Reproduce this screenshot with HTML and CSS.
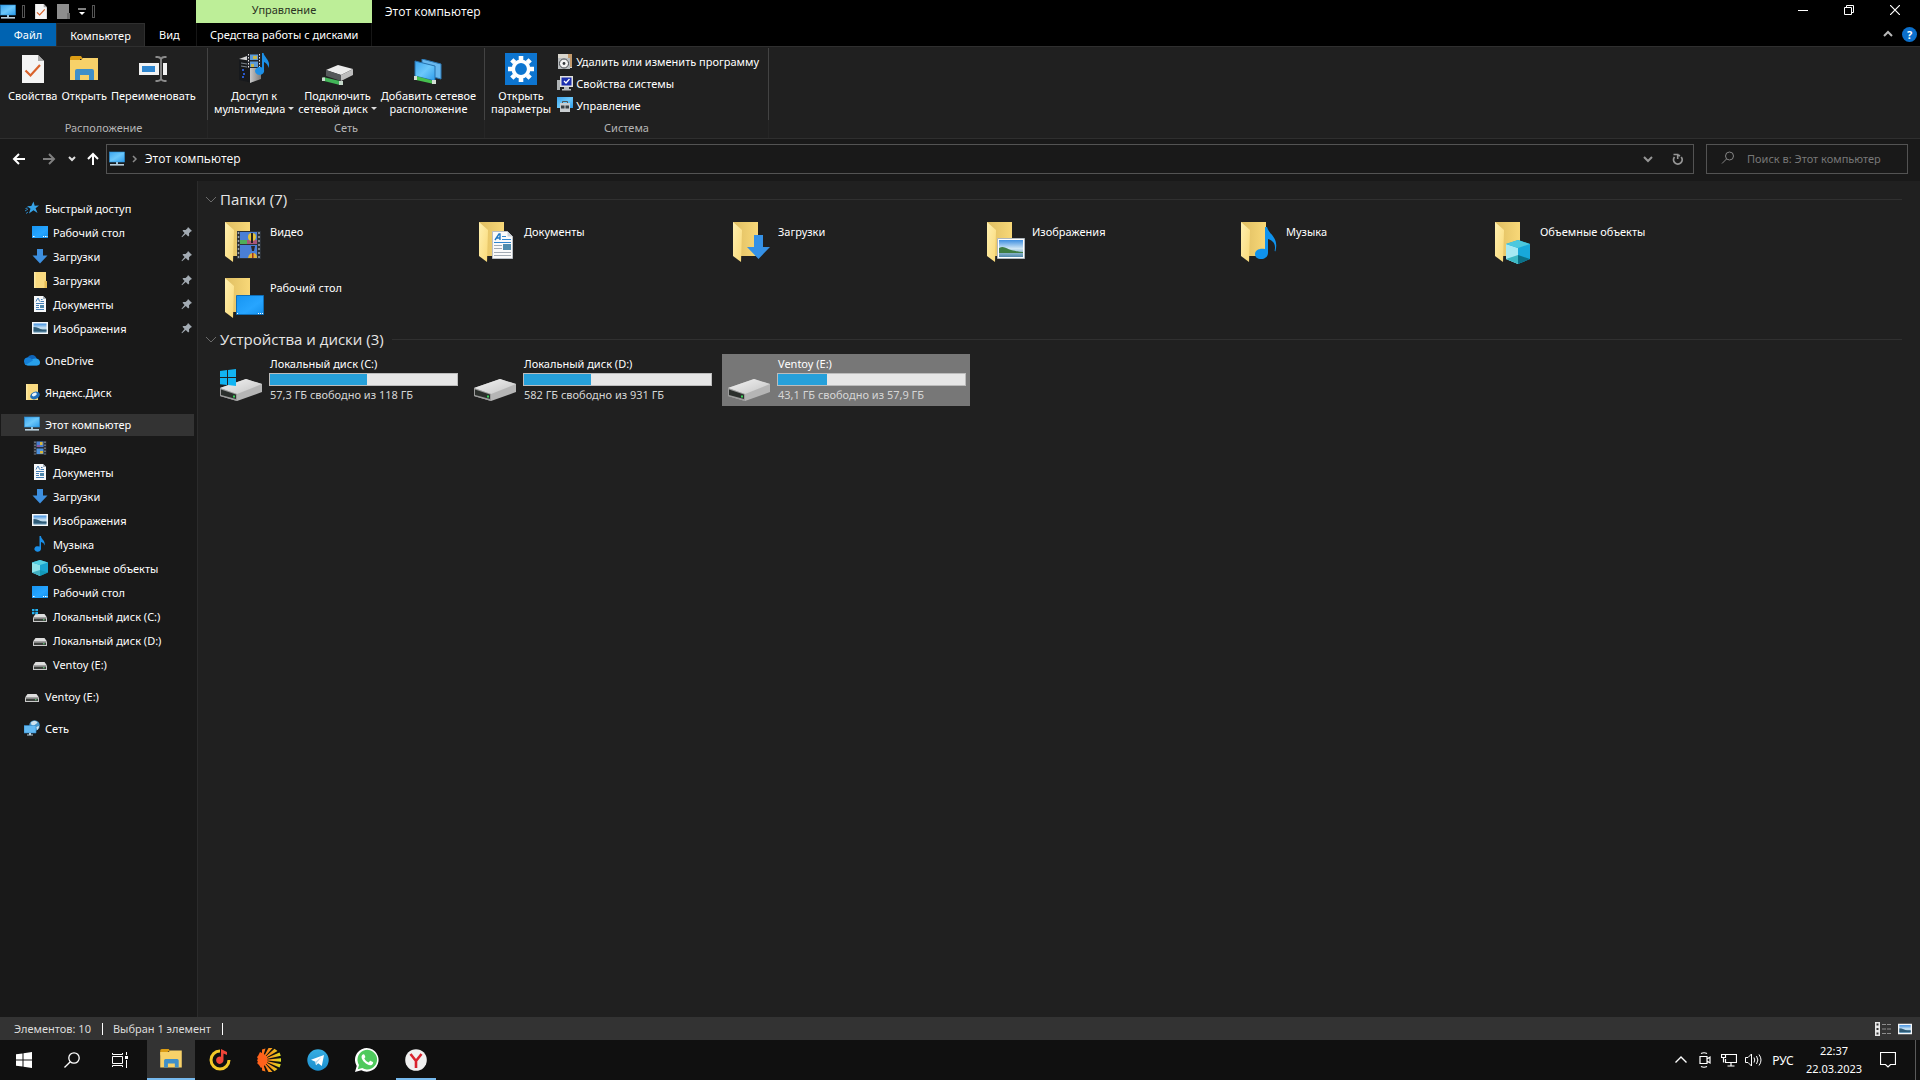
FILE: index.html
```html
<!DOCTYPE html>
<html lang="ru">
<head>
    <meta charset="UTF-8">
    <meta name="viewport" content="width=device-width, initial-scale=1.0">
    <title>Этот компьютер</title>
    <link rel="stylesheet" href="styles.css">
</head>
<body>

<!-- Набор иконок -->
<svg class="sprite" aria-hidden="true">
    <defs>
        <linearGradient id="g-screen" x1="0" y1="0" x2="1" y2="1">
            <stop offset="0" stop-color="#3ba4ee"/><stop offset="0.5" stop-color="#6cc8fb"/><stop offset="1" stop-color="#2c9bea"/>
        </linearGradient>
        <linearGradient id="g-desk" x1="0" y1="0" x2="1" y2="1">
            <stop offset="0" stop-color="#1795f2"/><stop offset="0.6" stop-color="#27a5ff"/><stop offset="1" stop-color="#1490ec"/>
        </linearGradient>
        <linearGradient id="g-back" x1="0" y1="0" x2="1" y2="0">
            <stop offset="0" stop-color="#dfbe62"/><stop offset="1" stop-color="#f8d878"/>
        </linearGradient>
        <linearGradient id="g-flap" x1="0" y1="0" x2="1" y2="1">
            <stop offset="0" stop-color="#fff0b0"/><stop offset="1" stop-color="#f9d978"/>
        </linearGradient>
        <linearGradient id="g-drive" x1="0" y1="0" x2="1" y2="1">
            <stop offset="0" stop-color="#f4f4f4"/><stop offset="1" stop-color="#c4c4c4"/>
        </linearGradient>
        <linearGradient id="g-sky" x1="0" y1="0" x2="0" y2="1">
            <stop offset="0" stop-color="#3f8fe0"/><stop offset="0.5" stop-color="#cfe6f5"/><stop offset="1" stop-color="#4d86a8"/>
        </linearGradient>
        <linearGradient id="g-tower" x1="0" y1="0" x2="1" y2="0">
            <stop offset="0" stop-color="#c8c8c8"/><stop offset="1" stop-color="#7b7b7b"/>
        </linearGradient>
        <linearGradient id="g-sun" x1="0" y1="0" x2="24" y2="0" gradientUnits="userSpaceOnUse">
            <stop offset="0" stop-color="#ff4a1a"/><stop offset="0.45" stop-color="#ff8a1a"/><stop offset="1" stop-color="#d8e020"/>
        </linearGradient>
        <linearGradient id="g-tg" x1="0" y1="0" x2="0" y2="1">
            <stop offset="0" stop-color="#37aee2"/><stop offset="1" stop-color="#1b8fcf"/>
        </linearGradient>
    </defs>

    <symbol id="i-pc" viewBox="0 0 16 16">
        <rect x="0.5" y="1" width="15" height="10" fill="url(#g-screen)" stroke="#2b8fd8" stroke-width="0.6"/>
        <path d="M7 11h2v2H7z" fill="#9cc4dc"/><path d="M1 13h14v1.6H1z" fill="#b8cfdd"/>
    </symbol>
    <symbol id="i-star" viewBox="0 0 16 16">
        <path d="M9.5 1.5l1.2 4.2 4.3-.2-3.400 2.700 1.900 4.800-4-2.700-4.500 3.200 1.500-4.700L3 6.200l4.300-.3z" fill="#36a3e8"/>
        <path d="M1 11l3-2M2 13.500l2-1.500M1.500 8.500l2-.5" stroke="#2b86c4"/>
    </symbol>
    <symbol id="i-desk" viewBox="0 0 16 16">
        <path d="M0 2h16v12H0z" fill="url(#g-desk)"/><path d="M1 12.500h1.500M11 12.500h1M13 12.500h1M14.500 12.500h1" stroke="#fff"/>
    </symbol>
    <symbol id="i-down" viewBox="0 0 16 16"><path d="M5 1h6v6.500h4.500L8 15.500.5 7.500H5z" fill="#3d8fdf"/></symbol>
    <symbol id="i-folder" viewBox="0 0 16 16">
        <path d="M2 0h12v16H2z" fill="#f9da80"/><path d="M2 0h1.500v16H2z" fill="#fde9a4"/><path d="M12.500 9H15v7h-2.500z" fill="#e6bd55"/>
    </symbol>
    <symbol id="i-doc" viewBox="0 0 16 16">
        <path d="M2 0h9l3 3v13H2z" fill="#f6f8fa"/><path d="M11 0l3 3h-3z" fill="#a7b4c0"/>
        <path d="M4 5.500l1.500-3h1l1 3M9 3.500h1.500M8.500 5.500H12M4 7.500h8M4 9.500h3M4 11.500h3M4 13.500h8" stroke="#2f6fae" stroke-width="0.9" fill="none"/><path d="M8 9h4v3H8z" fill="#4f87ab"/>
    </symbol>
    <symbol id="i-pic" viewBox="0 0 16 16">
        <path d="M0 2h16v12H0z" fill="#f5f7f9"/><path d="M1.500 3.500h13v9h-13z" fill="url(#g-sky)"/>
        <path d="M1.500 7c4 0 6 2 9 2.500h4v2h-13z" fill="#2f5b76"/>
    </symbol>
    <symbol id="i-cloud" viewBox="0 0 16 16">
        <path d="M4 13.500a4 4 0 01-.6-7.800 5 5 0 019.200.8A3.600 3.600 0 0112.500 13.500z" fill="#0f64b8"/>
        <path d="M8 7.500c3-2 8-.5 8 3a3 3 0 01-3 3H4c-2 0-3-1-3.500-2z" fill="#28a0ea"/><path d="M0 9.500a4 4 0 014-4c2.500 0 3.500 1.500 5 3L2 12.700A4 4 0 010 9.500z" fill="#1580d8"/>
    </symbol>
    <symbol id="i-ydisk" viewBox="0 0 16 16">
        <path d="M2 0h12v16H2z" fill="#f9da80"/><path d="M2 0h1.500v16H2z" fill="#fde9a4"/>
        <ellipse cx="11" cy="11.500" rx="5" ry="3.600" transform="rotate(-25 11 11.500)" fill="#1f6fb8"/><ellipse cx="10.300" cy="10.500" rx="2.600" ry="1.600" transform="rotate(-25 10.300 10.500)" fill="#e8f3fb"/>
    </symbol>
    <symbol id="i-film" viewBox="0 0 16 16">
        <path d="M1.500 1h13v14h-13z" fill="#2a2d33"/><path d="M4.500 1.500h7V7h-7z" fill="#4a7fd0"/><path d="M4.500 8.500h7V14h-7z" fill="#4f93df"/>
        <path d="M8 2h2.500v3H8zM8 11h3v2.500H8z" fill="#d9b73a"/><path d="M5 5h3v2H5z" fill="#8a5aa0"/>
        <path d="M3 1.500v13M13 1.500v13" stroke="#a8b0b8" stroke-dasharray="1.500 1.500"/>
    </symbol>
    <symbol id="i-note" viewBox="0 0 16 16">
        <path d="M7.500 0H9c0 3.500 4.500 4 3.700 9.500-.5-2-2-3.200-3.700-3.500v6.800A3.300 2.800 0 117.500 10.600z" fill="#1a8fe8"/>
    </symbol>
    <symbol id="i-cube" viewBox="0 0 16 16">
        <path d="M8 0l8 2.500v10L8 16 0 12.500v-10z" fill="#1aa5d0"/><path d="M0 2.500L8 5v11L0 12.500z" fill="#8fe3ea"/>
        <path d="M8 0l8 2.500L8 5 0 2.500z" fill="#55cfe0"/><path d="M0 12.500L8 10v6zM8 10l8 2.500L8 16z" fill="#0f8fa8" opacity=".6"/>
    </symbol>
    <symbol id="i-hdd" viewBox="0 0 16 16">
        <path d="M3.500 6h9L15 9.500H1z" fill="#dedede"/><path d="M1 9.500h14V14H1z" fill="#c9c9c9"/><path d="M2 10.500h12V13H2z" fill="#3c3f3c"/><path d="M11 11.300h1.500v1H11z" fill="#5fe07a"/>
    </symbol>
    <symbol id="i-hddwin" viewBox="0 0 16 16">
        <use href="#i-hdd"/><path d="M0 1h2.500v2.300H0zM3.300 1H6v2.300H3.300zM0 4h2.500v2.300H0zM3.300 4H6v2.300H3.300z" fill="#22b0f0"/>
    </symbol>
    <symbol id="i-net" viewBox="0 0 16 16">
        <circle cx="10.500" cy="5.500" r="5.300" fill="#4b97c8"/><path d="M7 2.500c2-2 5-2 6.500 0-1 2-3 1.500-3.500 3.500-2 0-3-1-3-3.500zM12 7l3-1c0 2-1 3.500-2 4z" fill="#cfe3ee"/>
        <path d="M0 5.500h12v7.500H0z" fill="#63b9f2" stroke="#2f86c8" stroke-width="0.600"/><path d="M5 13h2v1.500H5zM3 14.500h6v1H3z" fill="#b8cfdd"/>
    </symbol>
    <symbol id="i-pin" viewBox="0 0 12 12"><path d="M7 1l4 4-1.200.4L8 7.200l.2 2.300-1 .9-2.400-2.300L1 11.300l-.5-.5L3.600 7 1.500 4.800l.8-.9 2.300.1L6.500 2.200z" fill="#a3abb3"/></symbol>
    <symbol id="i-check" viewBox="0 0 22 28">
        <path d="M0 0h16l6 6v22H0z" fill="#f4f4f4"/><path d="M16 0l6 6h-6z" fill="#a8a8a8"/><path d="M3.500 15.500l5 5L18 10" fill="none" stroke="#d9622b" stroke-width="2.200"/>
    </symbol>
    <symbol id="i-explorer" viewBox="0 0 28 26">
        <path d="M0 2q0-2 2-2h9l2 3h-3v5H0z" fill="#dc9d15"/><path d="M0 4l11 0 2-2h15v22H0z" fill="#f7d169"/>
        <path d="M5 24V15q0-2 2-2h15q2 0 2 2v9h-5v-5h-9v5z" fill="#3f8fc8"/>
    </symbol>
    <symbol id="i-rename" viewBox="0 0 28 26">
        <path d="M0 7h20v12H0zM24 7h4v12h-4z" fill="#f2f2f2"/><path d="M3 10h13v6H3z" fill="#2f86cf"/>
        <path d="M16.500 1h2q2.500 0 3.500 2 1-2 3.500-2h2M22 3v20M16.500 25h2q2.500 0 3.500-2 1 2 3.500 2h2" fill="none" stroke="#8b8b8b" stroke-width="1.800"/>
    </symbol>
    <symbol id="i-media" viewBox="0 0 32 32">
        <path d="M1 6l8-3 14 3-8 3v21L1 27z" fill="#17191c"/><path d="M1 6l8-3 14 2-9 3z" fill="#d5d5d5"/><path d="M12 8l11-3v21l-11 4z" fill="url(#g-tower)"/>
        <path d="M3 10l6 1M3 13l6 1" stroke="#7e868e"/><path d="M4 17h2M5 21h2M4 24h2" stroke="#2f6cff" stroke-width="1.500"/>
        <path d="M9 1h14v14H9z" fill="#22252b"/><path d="M12 1.500h8V7h-8zM12 8.500h8V14h-8z" fill="#5c9ad6"/><path d="M15 3h4v3h-4zM13 11h3v3h-3z" fill="#c7b64a"/>
        <path d="M10.500 1v14M21.500 1v14" stroke="#e6e6e6" stroke-dasharray="1.500 1.500"/>
        <path d="M24 0h1.500c1 5 7.500 7 5 15-.5-3-2-5-4.500-6v8A4.500 4 0 1124 14.500z" fill="#1c8fe6"/>
    </symbol>
    <symbol id="i-netdrive" viewBox="0 0 32 20">
        <path d="M4 5L16 0l15 4-12 6z" fill="#ececec"/><path d="M4 5l15 5v6L4 11z" fill="#55585a"/><path d="M19 10l12-6v6l-12 6z" fill="#bdbdbd"/>
        <path d="M1 12l17 4v4L2 16z" fill="#42b658"/><path d="M0 12.500h3v3.500H0zM17 16h4v4h-4z" fill="#c6d8ca"/>
    </symbol>
    <symbol id="i-netplace" viewBox="0 0 28 26">
        <path d="M8 0l19 5v15L8 15z" fill="#68b8ee" stroke="#2c78b4"/><path d="M1 2l20 5v15L1 17z" fill="url(#g-screen)" stroke="#2671ad"/>
        <path d="M2 17l18 5v3L2 21z" fill="#46c04f"/><path d="M0 17h3v4H0zM18 21h4v4h-4z" fill="#d2ded4"/>
    </symbol>
    <symbol id="i-gear" viewBox="0 0 32 32">
        <path d="M0 0h32v32H0z" fill="#0d75d0"/>
        <circle cx="16" cy="16" r="7.700" fill="none" stroke="#fff" stroke-width="3.600"/>
        <g stroke="#fff" stroke-width="4.600"><path d="M16 3v4M16 25v4M3 16h4M25 16h4" /><path d="M6.800 6.800l2.900 2.900M22.300 22.300l2.900 2.900M6.800 25.200l2.900-2.900M22.300 9.700l2.900-2.900"/></g>
    </symbol>
    <symbol id="i-uninstall" viewBox="0 0 16 16">
        <path d="M1 1h12l2 2v12H1z" fill="#d9d6cd"/><path d="M11 1h4v13h-4z" fill="#c49a6c"/><path d="M1 5h12v11H1z" fill="#b9bcbe"/>
        <circle cx="7" cy="10.500" r="4.500" fill="#f3f3f3" stroke="#44484c"/><circle cx="7" cy="10.500" r="1.400" fill="#33373b"/>
    </symbol>
    <symbol id="i-sysprops" viewBox="0 0 16 16">
        <path d="M0 5h3v10H0z" fill="#aeb2b4"/><path d="M3 1h13v11H3z" fill="#e1e1dd"/><path d="M4.500 2.500h10v8h-10z" fill="#1c2fae"/><path d="M7 6l2 2 3.500-4" fill="none" stroke="#fff" stroke-width="1.300"/><path d="M7 12h5v2h2v1.500H5V14h2z" fill="#b9bcbe"/>
    </symbol>
    <symbol id="i-manage" viewBox="0 0 16 16">
        <path d="M0 0h16v11H0z" fill="url(#g-screen)"/><path d="M3 6h10v9H3z" fill="#c9cdd0"/><path d="M5.500 6V4.500h5V6" fill="none" stroke="#555"/><path d="M4 8.500h3.500v3H4zM8.500 8.500H12v3H8.500z" fill="#3b4248"/>
    </symbol>

    <!-- Крупные папки -->
    <symbol id="b-folder" viewBox="0 0 48 48">
        <path d="M7 6h25v34H11z" fill="url(#g-back)"/><path d="M7 6l9 8-1 32-8-6z" fill="url(#g-flap)"/>
    </symbol>
    <symbol id="b-video" viewBox="0 0 48 48">
        <use href="#b-folder"/><path d="M19 15h24v28H19z" fill="#2d3238"/><path d="M22 16h17v12H22zM22 29h17v13H22z" fill="#4a7fd6"/>
        <path d="M22 24h17v4H22z" fill="#a8557a"/><path d="M22 24h7v4h-7z" fill="#4fae5a"/><circle cx="34" cy="21" r="4" fill="#e2c13a"/><path d="M33 17h2v10h-2z" fill="#25211c"/>
        <path d="M33 30h4l-1 5h-2z" fill="#2b2526"/><path d="M30 42q1-5 5-5t4 5z" fill="#e0b43a"/><path d="M34 37h1.500v5H34z" fill="#a03020"/>
        <path d="M20.500 16v27M41 16v27" stroke="#9aa3ab" stroke-width="1.500" stroke-dasharray="2 2"/>
    </symbol>
    <symbol id="b-docs" viewBox="0 0 48 48">
        <use href="#b-folder"/><path d="M20.500 15.500h15l5 5v22h-20z" fill="#fafafa" stroke="#b9bec4"/><path d="M35.500 15.500l5 5h-5z" fill="#c9d0d6"/>
        <path d="M23 24l4-6h1v6M24.500 22H28" fill="none" stroke="#1f78c4" stroke-width="1.400"/><path d="M30 20.500h4M30 23.500h9M22 26.500h17" stroke="#2f86cf"/>
        <path d="M22 29.500h8M22 32.500h8M22 36.500h17M22 39.500h17" stroke="#a2abb4"/><path d="M31 28h8v6h-8z" fill="#4f8cae"/>
    </symbol>
    <symbol id="b-down" viewBox="0 0 48 48"><use href="#b-folder"/><path d="M28 19h9v12h7L32.500 43 21 31h7z" fill="#3591e6"/></symbol>
    <symbol id="b-pics" viewBox="0 0 48 48">
        <use href="#b-folder"/><path d="M17.500 22.500h27v20h-27z" fill="#fff" stroke="#aeb6bd"/><path d="M19 24h24v17H19z" fill="url(#g-sky)"/>
        <path d="M19 32c5-3 8 1 12 2 5 1 8 2 12 2v1H19z" fill="#3f7d43"/>
    </symbol>
    <symbol id="b-music" viewBox="0 0 48 48"><use href="#b-folder"/><path d="M31 11h2c2 8 12 10 8.500 24-.500 1-1 0-.8-.8 1.500-7-2.700-10-6.700-11.200V37c0 3.500-3 6-6.800 6S21 41 21 38c0-3.500 4-6 10-5z" fill="#0f93ee"/></symbol>
    <symbol id="b-cube" viewBox="0 0 48 48">
        <use href="#b-folder"/><path d="M30 24l12 4v15l-12 5-12-5V28z" fill="#18a8da"/><path d="M18 28l12 4v16l-12-5z" fill="#a6e9f2"/>
        <path d="M30 24l12 4-12 4-12-4z" fill="#4cc8de"/><path d="M18 43l12-4v9z" fill="#3cb9c4"/><path d="M30 39l12 4-12 5z" fill="#0b7188"/>
    </symbol>
    <symbol id="b-desk" viewBox="0 0 48 48"><use href="#b-folder"/><path d="M18.500 23.500h27v19h-27z" fill="url(#g-desk)" stroke="#0f6fb8"/><path d="M19 41.500h1M40 41.500h1M42 41.500h1M44 41.500h1" stroke="#fff"/></symbol>
    <symbol id="b-drive" viewBox="0 0 48 48">
        <path d="M2 32l26-9 16 5v8l-25 9-17-5z" fill="#b5b5b5"/><path d="M2 32l26-9 16 5-25 10z" fill="url(#g-drive)"/>
        <path d="M2 32l17 6v7L2 40z" fill="#9b9b9b"/><path d="M3 33.500l15 5V43L3 39z" fill="#2b2f2c"/><path d="M15 39.500h2v2h-2z" fill="#39d35a"/>
    </symbol>
    <symbol id="b-drivewin" viewBox="0 0 48 48">
        <use href="#b-drive"/><path d="M2 15l7-1v7H2zM10 14l8-1v8h-8zM2 22h7v7l-7-.800zM10 22h8v8l-8-1z" fill="#12b4f2"/>
    </symbol>
</svg>

<div class="window">

    <header class="titlebar">
        <div class="titlebar-left">
            <div class="quick-access">
                <svg class="ico16"><use href="#i-pc"/></svg>
                <span class="qa-sep"></span>
                <button class="qa-check" aria-label="Свойства"><svg width="12" height="15"><use href="#i-check"/></svg></button>
                <button class="qa-new" aria-label="Новая папка"><svg width="13" height="15" viewBox="0 0 13 15"><path d="M0 0h12v15H0z" fill="#8d8d8d"/><path d="M10 9h3v6h-3z" fill="#6f6f6f"/></svg></button>
                <button class="qa-more" aria-label="Настройка панели"><svg width="8" height="8" viewBox="0 0 8 8"><path d="M0 1h8" stroke="#fff"/><path d="M1 4h6L4 7z" fill="#fff"/></svg></button>
                <span class="qa-sep"></span>
            </div>
            <nav class="tabs">
                <button class="tab tab-file">Файл</button>
                <button class="tab tab-active">Компьютер</button>
                <button class="tab">Вид</button>
            </nav>
        </div>
        <div class="context-tab">
            <span class="context-title">Управление</span>
            <button class="tab">Средства работы с дисками</button>
        </div>
        <h1 class="window-title">Этот компьютер</h1>
        <div class="titlebar-right">
            <div class="caption">
                <button aria-label="Свернуть"><svg width="10" height="10" viewBox="0 0 10 10"><path d="M0 5.500h10" stroke="#fff"/></svg></button>
                <button aria-label="Развернуть"><svg width="10" height="10" viewBox="0 0 10 10"><path d="M.5 2.500h7v7h-7zM2.500 2V.5h7v7H8" fill="none" stroke="#fff"/></svg></button>
                <button aria-label="Закрыть"><svg width="10" height="10" viewBox="0 0 10 10"><path d="M0 0l10 10M10 0L0 10" stroke="#fff" stroke-width="1.200"/></svg></button>
            </div>
            <div class="ribbon-tools">
                <button aria-label="Свернуть ленту"><svg width="10" height="8" viewBox="0 0 10 8"><path d="M1 6l4-4 4 4" fill="none" stroke="#b8b8b8" stroke-width="2"/></svg></button>
                <button class="help" aria-label="Справка">?</button>
            </div>
        </div>
    </header>

    <section class="ribbon">
        <div class="ribbon-group group-place">
            <div class="ribbon-items">
                <button class="rbtn"><span class="rico"><svg width="22" height="28"><use href="#i-check"/></svg></span>Свойства</button>
                <button class="rbtn"><span class="rico"><svg width="28" height="26"><use href="#i-explorer"/></svg></span>Открыть</button>
                <button class="rbtn"><span class="rico"><svg width="28" height="26"><use href="#i-rename"/></svg></span>Переименовать</button>
            </div>
            <div class="ribbon-label">Расположение</div>
        </div>
        <div class="ribbon-group group-net">
            <div class="ribbon-items">
                <button class="rbtn"><span class="rico"><svg width="32" height="32"><use href="#i-media"/></svg></span>Доступ к<br>мультимедиа<i class="drop"></i></button>
                <button class="rbtn"><span class="rico rico-low"><svg width="32" height="20"><use href="#i-netdrive"/></svg></span>Подключить<br>сетевой диск<i class="drop"></i></button>
                <button class="rbtn"><span class="rico rico-low"><svg width="28" height="26"><use href="#i-netplace"/></svg></span>Добавить сетевое<br>расположение</button>
            </div>
            <div class="ribbon-label">Сеть</div>
        </div>
        <div class="ribbon-group group-sys">
            <div class="ribbon-items">
                <button class="rbtn"><span class="rico"><svg width="32" height="32"><use href="#i-gear"/></svg></span>Открыть<br>параметры</button>
                <div class="ribbon-list">
                    <button><svg class="ico16"><use href="#i-uninstall"/></svg>Удалить или изменить программу</button>
                    <button><svg class="ico16"><use href="#i-sysprops"/></svg>Свойства системы</button>
                    <button><svg class="ico16"><use href="#i-manage"/></svg>Управление</button>
                </div>
            </div>
            <div class="ribbon-label">Система</div>
        </div>
    </section>

    <div class="addressbar">
        <div class="nav-buttons">
            <button aria-label="Назад"><svg width="14" height="12" viewBox="0 0 14 12"><path d="M13 6H2M7 1L2 6l5 5" fill="none" stroke="#fff" stroke-width="2"/></svg></button>
            <button aria-label="Вперед"><svg width="14" height="12" viewBox="0 0 14 12"><path d="M1 6h11M7 1l5 5-5 5" fill="none" stroke="#7f7f7f" stroke-width="2"/></svg></button>
            <button class="nav-small" aria-label="Последние"><svg width="8" height="6" viewBox="0 0 8 6"><path d="M1 1l3 3 3-3" fill="none" stroke="#e0e0e0" stroke-width="2"/></svg></button>
            <button class="nav-up" aria-label="Вверх"><svg width="12" height="14" viewBox="0 0 12 14"><path d="M6 13V2M1 7l5-5 5 5" fill="none" stroke="#fff" stroke-width="2"/></svg></button>
        </div>
        <div class="path">
            <svg class="ico16"><use href="#i-pc"/></svg>
            <svg class="crumb" width="6" height="8" viewBox="0 0 6 8"><path d="M1 1l3 3-3 3" fill="none" stroke="#8a8a8a" stroke-width="1.500"/></svg>
            <a href="#" class="path-text">Этот компьютер</a>
            <button aria-label="Журнал"><svg width="10" height="8" viewBox="0 0 10 8"><path d="M1 2l4 4 4-4" fill="none" stroke="#969696" stroke-width="2"/></svg></button>
            <button aria-label="Обновить"><svg width="12" height="12" viewBox="0 0 12 12"><path d="M9.200 4A4.300 4.300 0 112.500 4" fill="none" stroke="#969696" stroke-width="1.800"/><path d="M1.500 1.500h4.200v4.500M5.500 1.500L8 3" fill="none" stroke="#969696" stroke-width="1.600"/></svg></button>
        </div>
        <label class="search">
            <svg width="14" height="14" viewBox="0 0 14 14"><circle cx="8.500" cy="5" r="4" fill="none" stroke="#858585"/><path d="M5.500 8L1 12.500" stroke="#858585"/></svg>
            <input type="text" placeholder="Поиск в: Этот компьютер" aria-label="Поиск">
        </label>
    </div>

    <div class="content">
        <nav class="sidebar">
            <div class="tree">
                <a href="#" class="node"><svg class="ico16"><use href="#i-star"/></svg>Быстрый доступ</a>
                <a href="#" class="node child"><svg class="ico16"><use href="#i-desk"/></svg>Рабочий стол<svg class="pin"><use href="#i-pin"/></svg></a>
                <a href="#" class="node child"><svg class="ico16"><use href="#i-down"/></svg>Загрузки<svg class="pin"><use href="#i-pin"/></svg></a>
                <a href="#" class="node child"><svg class="ico16"><use href="#i-folder"/></svg>Загрузки<svg class="pin"><use href="#i-pin"/></svg></a>
                <a href="#" class="node child"><svg class="ico16"><use href="#i-doc"/></svg>Документы<svg class="pin"><use href="#i-pin"/></svg></a>
                <a href="#" class="node child"><svg class="ico16"><use href="#i-pic"/></svg>Изображения<svg class="pin"><use href="#i-pin"/></svg></a>
            </div>
            <div class="tree">
                <a href="#" class="node"><svg class="ico16"><use href="#i-cloud"/></svg>OneDrive</a>
            </div>
            <div class="tree">
                <a href="#" class="node"><svg class="ico16"><use href="#i-ydisk"/></svg>Яндекс.Диск</a>
            </div>
            <div class="tree">
                <a href="#" class="node current"><svg class="ico16"><use href="#i-pc"/></svg>Этот компьютер</a>
                <a href="#" class="node child"><svg class="ico16"><use href="#i-film"/></svg>Видео</a>
                <a href="#" class="node child"><svg class="ico16"><use href="#i-doc"/></svg>Документы</a>
                <a href="#" class="node child"><svg class="ico16"><use href="#i-down"/></svg>Загрузки</a>
                <a href="#" class="node child"><svg class="ico16"><use href="#i-pic"/></svg>Изображения</a>
                <a href="#" class="node child"><svg class="ico16"><use href="#i-note"/></svg>Музыка</a>
                <a href="#" class="node child"><svg class="ico16"><use href="#i-cube"/></svg>Объемные объекты</a>
                <a href="#" class="node child"><svg class="ico16"><use href="#i-desk"/></svg>Рабочий стол</a>
                <a href="#" class="node child"><svg class="ico16"><use href="#i-hddwin"/></svg>Локальный диск (C:)</a>
                <a href="#" class="node child"><svg class="ico16"><use href="#i-hdd"/></svg>Локальный диск (D:)</a>
                <a href="#" class="node child"><svg class="ico16"><use href="#i-hdd"/></svg>Ventoy (E:)</a>
            </div>
            <div class="tree">
                <a href="#" class="node"><svg class="ico16"><use href="#i-hdd"/></svg>Ventoy (E:)</a>
            </div>
            <div class="tree">
                <a href="#" class="node"><svg class="ico16"><use href="#i-net"/></svg>Сеть</a>
            </div>
        </nav>

        <main class="files">
            <h2 class="group-title"><svg width="12" height="8" viewBox="0 0 12 8"><path d="M1 1l5 5 5-5" fill="none" stroke="#6b6b6b"/></svg>Папки (7)</h2>
            <div class="tiles">
                <a href="#" class="tile"><svg class="ico48"><use href="#b-video"/></svg><span class="tile-name">Видео</span></a>
                <a href="#" class="tile"><svg class="ico48"><use href="#b-docs"/></svg><span class="tile-name">Документы</span></a>
                <a href="#" class="tile"><svg class="ico48"><use href="#b-down"/></svg><span class="tile-name">Загрузки</span></a>
                <a href="#" class="tile"><svg class="ico48"><use href="#b-pics"/></svg><span class="tile-name">Изображения</span></a>
                <a href="#" class="tile"><svg class="ico48"><use href="#b-music"/></svg><span class="tile-name">Музыка</span></a>
                <a href="#" class="tile"><svg class="ico48"><use href="#b-cube"/></svg><span class="tile-name">Объемные объекты</span></a>
                <a href="#" class="tile"><svg class="ico48"><use href="#b-desk"/></svg><span class="tile-name">Рабочий стол</span></a>
            </div>

            <h2 class="group-title"><svg width="12" height="8" viewBox="0 0 12 8"><path d="M1 1l5 5 5-5" fill="none" stroke="#6b6b6b"/></svg>Устройства и диски (3)</h2>
            <div class="tiles">
                <a href="#" class="tile">
                    <svg class="ico48"><use href="#b-drivewin"/></svg>
                    <span class="drive">
                        <span class="drive-name">Локальный диск (C:)</span>
                        <span class="bar"><span class="bar-fill" style="width: 52%"></span></span>
                        <span class="drive-free">57,3 ГБ свободно из 118 ГБ</span>
                    </span>
                </a>
                <a href="#" class="tile">
                    <svg class="ico48"><use href="#b-drive"/></svg>
                    <span class="drive">
                        <span class="drive-name">Локальный диск (D:)</span>
                        <span class="bar"><span class="bar-fill" style="width: 36%"></span></span>
                        <span class="drive-free">582 ГБ свободно из 931 ГБ</span>
                    </span>
                </a>
                <a href="#" class="tile selected">
                    <svg class="ico48"><use href="#b-drive"/></svg>
                    <span class="drive">
                        <span class="drive-name">Ventoy (E:)</span>
                        <span class="bar"><span class="bar-fill" style="width: 26%"></span></span>
                        <span class="drive-free">43,1 ГБ свободно из 57,9 ГБ</span>
                    </span>
                </a>
            </div>
        </main>
    </div>

    <footer class="statusbar">
        <span class="status-item">Элементов: 10</span>
        <span class="status-item">Выбран 1 элемент</span>
        <div class="view-modes">
            <button aria-label="Таблица"><svg width="17" height="14" viewBox="0 0 17 14"><path d="M0 0h5v14H0z" fill="#e8e8e8"/><path d="M1.500 1.500h2v2h-2zM1.500 6h2v2h-2zM1.500 10.500h2v2h-2z" fill="#333"/><path d="M7 2.500h4M12 2.500h4M7 7h4M12 7h4M7 11.500h4M12 11.500h4" stroke="#8d8d8d"/></svg></button>
            <button aria-label="Крупные значки"><svg width="14" height="14"><use href="#i-pic"/></svg></button>
        </div>
    </footer>
</div>

<div class="taskbar">
    <button class="task" aria-label="Пуск"><svg width="16" height="16" viewBox="0 0 16 16"><path d="M0 2.300L6.500 1.400v6.100H0zM7.500 1.200L16 0v7.500H7.500zM0 8.500h6.500v6.100L0 13.700zM7.500 8.500H16V16l-8.500-1.200z" fill="#fff"/></svg></button>
    <button class="task" aria-label="Поиск"><svg width="16" height="16" viewBox="0 0 16 16"><circle cx="10" cy="6" r="5.200" fill="none" stroke="#fff" stroke-width="1.300"/><path d="M6.300 9.700L.5 15.500" stroke="#fff" stroke-width="1.300"/></svg></button>
    <button class="task" aria-label="Представление задач"><svg width="16" height="16" viewBox="0 0 16 16"><path d="M.5 4.500h10v7H.5zM.5 1v1.500h10V1M.5 15v-1.500h10V15M14.500 0v3M14.500 8v8" fill="none" stroke="#fff"/><path d="M13 4h3v3h-3z" fill="#fff"/></svg></button>
    <div class="apps">
        <button class="task active" aria-label="Проводник"><svg width="22" height="20"><use href="#i-explorer"/></svg></button>
        <button class="task" aria-label="Музыка"><svg width="22" height="22" viewBox="0 0 22 22"><path d="M11 2a9 9 0 109 9" fill="none" stroke="#f4c928" stroke-width="3"/><path d="M12 0l6 3v3l-3.500-1.500V11A3.700 3.700 0 1112 7.700z" fill="#f04438"/></svg></button>
        <button class="task" aria-label="Афиша"><svg width="24" height="24" viewBox="0 0 24 24"><path d="M5 12L24 10.300v3.400zM5 12L22.500 4.500l1.300 3.200zM5 12L17.500.8l3 2.300zM5 12L11.500 0h4zM5 12L5 1.500l3.500-1zM5 12l17.500 7.500 1.300-3.200zM5 12l12.500 11.200 3-2.300zM5 12l6.500 12h4zM5 12v10.500l3.500 1z" fill="url(#g-sun)"/><path d="M1 8l2-4 4 2 3 3q1 3 0 6l-3 3-3 2-2-3-2-2 1-1-1-2 1-1-1-2z" fill="#ff621c"/></svg></button>
        <button class="task" aria-label="Telegram"><svg width="22" height="22" viewBox="0 0 22 22"><circle cx="11" cy="11" r="10.700" fill="url(#g-tg)"/><path d="M4 10.800L17 6l-2.200 11-3.600-2.700L9 16.300l-.6-3.600z" fill="#fff"/><path d="M8.400 12.700L14.500 8 10 13.400 9 16.300z" fill="#b6d8ea"/></svg></button>
        <button class="task" aria-label="WhatsApp"><svg width="24" height="24" viewBox="0 0 24 24"><path d="M0 24l1.700-6A11.800 11.800 0 116.300 22.300z" fill="#fff"/><path d="M2.800 21.200l1.200-4.300a9.800 9.800 0 113.300 3.200z" fill="#4fca5d"/><path d="M8.700 6.300c.5 0 .7.200.9.700l.7 1.800c.1.400-.1.800-1 1.700 1 2 2.400 3.200 4.300 4l1.300-1.500c.3-.3.500-.3.900-.1l2 1c.4.200.4.400.3 1-.3 1.600-1.600 2.300-3 2.300-3.500-.3-8.300-4.500-8.600-8.200 0-1.500 1.100-2.700 2.200-2.700z" fill="#fff"/></svg></button>
        <button class="task running" aria-label="Яндекс"><svg width="22" height="22" viewBox="0 0 22 22"><circle cx="11" cy="11" r="10.800" fill="#f0f0f0"/><path d="M5.500 5l5.500 7 5.500-7M11 11.500V19" fill="none" stroke="#d9232e" stroke-width="2.600"/></svg></button>
    </div>

    <div class="tray">
        <button aria-label="Скрытые значки"><svg width="12" height="8" viewBox="0 0 12 8"><path d="M.5 6.500L6 1l5.500 5.500" fill="none" stroke="#fff" stroke-width="1.400"/></svg></button>
        <button aria-label="Камера"><svg width="12" height="16" viewBox="0 0 12 16"><path d="M1 4.500h7v7H1zM8 7l3-2v6L8 9M2 1.500q3-1.500 6 0M2 14.500q3 1.500 6 0" fill="none" stroke="#fff" stroke-width="1.200"/></svg></button>
        <button aria-label="Сеть"><svg width="16" height="14" viewBox="0 0 16 14"><path d="M5 1.500h10.500v8H4.500V6M10 9.500v3M6.500 13h7M.5 1.500h4v3h-4zM2.500 4.500v5" fill="none" stroke="#fff" stroke-width="1.200"/></svg></button>
        <button aria-label="Громкость"><svg width="17" height="14" viewBox="0 0 17 14"><path d="M.5 4.500H3L6.500 1v12L3 9.500H.5z" fill="none" stroke="#fff"/><path d="M9 4.500q1.500 2.500 0 5M11.500 3q2.800 4 0 8M14 1.500q4 5.500 0 11" fill="none" stroke="#fff"/></svg></button>
        <button class="lang">РУС</button>
        <button class="clock">22:37<br>22.03.2023</button>
        <button class="notify" aria-label="Уведомления"><svg width="16" height="16" viewBox="0 0 16 16"><path d="M.5.500h15v12h-5L8 15l-2.500-2.500h-5z" fill="none" stroke="#fff" stroke-width="1.200"/></svg></button>
        <span class="show-desktop"></span>
    </div>
</div>

</body>
</html>
```

FILE: styles.css
```css
* {
    box-sizing: border-box;
}

body {
    margin: 0;
    height: 100vh;
    display: flex;
    flex-direction: column;
    background-color: #202020;
    color: #fff;
    font-family: "Noto Sans", "Open Sans", sans-serif;
    font-size: 11px;
    line-height: 13px;
    overflow: hidden;
}

button {
    display: flex;
    align-items: center;
    justify-content: center;
    padding: 0;
    border: none;
    background: none;
    color: inherit;
    font: inherit;
    white-space: nowrap;
    cursor: pointer;
}

a {
    color: inherit;
    text-decoration: none;
}

svg {
    display: block;
    flex-shrink: 0;
}

.sprite {
    position: absolute;
    width: 0;
    height: 0;
}

.ico16 {
    width: 16px;
    height: 16px;
}

.ico48 {
    width: 48px;
    height: 48px;
}

.window {
    flex: 1;
    min-height: 0;
    display: flex;
    flex-direction: column;
}

/* Заголовок окна */
.titlebar {
    display: flex;
    height: 46px;
    background-color: #000;
}

.titlebar-left {
    width: 196px;
}

.quick-access {
    display: flex;
    align-items: center;
    height: 23px;
}

.qa-sep {
    width: 3px;
    height: 13px;
    margin-left: 6px;
    border: 1px solid #555;
}

.qa-check,
.qa-new {
    margin-left: 10px;
}

.qa-more {
    margin: 0 0 0 8px;
}

.tabs {
    display: flex;
    height: 23px;
}

.tab {
    height: 23px;
    padding: 0 14px;
}

.tab-file {
    width: 56px;
    background-color: #0063b1;
}

.tab-active {
    width: 89px;
    background-color: #202020;
    border: 1px solid #2f2f2f;
    border-bottom: none;
}

.context-tab {
    width: 176px;
}

.context-title {
    display: block;
    height: 23px;
    line-height: 20px;
    text-align: center;
    background-color: #bdee98;
    color: #2b3323;
}

.context-tab .tab {
    width: 100%;
    padding: 0 0 0 13px;
    justify-content: flex-start;
    border: 1px solid #161616;
    border-width: 0 1px;
}

.window-title {
    flex: 1;
    margin: 0 0 0 13px;
    font-family: "Open Sans", sans-serif;
    font-size: 12px;
    font-weight: normal;
    line-height: 24px;
}

.titlebar-right {
    padding-right: 2px;
}

.caption {
    display: flex;
}

.caption button {
    width: 46px;
    height: 20px;
}

.ribbon-tools {
    display: flex;
    justify-content: flex-end;
    align-items: center;
    gap: 9px;
    height: 28px;
    padding-right: 1px;
}

.help {
    width: 15px;
    height: 15px;
    border-radius: 50%;
    background-color: #0b6fcb;
    font-weight: bold;
}

/* Лента */
.ribbon {
    display: flex;
    height: 93px;
    padding-top: 1px;
    background-color: #202020;
    border-top: 1px solid #2f2f2f;
    border-bottom: 1px solid #2f2f2f;
}

.ribbon-group {
    position: relative;
    width: 277px;
    border-right: 1px solid #262626;
}

.ribbon-group::after {
    content: "";
    position: absolute;
    right: -1px;
    top: 0;
    width: 1px;
    height: 72px;
    background-color: #434343;
}

.group-place {
    width: 208px;
}

.group-sys {
    width: 284px;
}

.ribbon-items {
    display: flex;
    align-items: flex-start;
    gap: 4px;
    height: 69px;
    padding-left: 6px;
}

.group-place .ribbon-items {
    padding-left: 8px;
}

.rbtn {
    display: block;
    padding-top: 5px;
    text-align: center;
}

.rico {
    display: flex;
    justify-content: center;
    align-items: center;
    height: 32px;
    margin-bottom: 4px;
}

.rico-low {
    align-items: flex-end;
}

.drop {
    display: inline-block;
    margin: 0 0 3px 3px;
    border: 3px solid transparent;
    border-top-color: #ddd;
    border-bottom: none;
}

.ribbon-list {
    padding: 2px 0 0 2px;
}

.ribbon-list button {
    height: 22px;
    gap: 3px;
}

.ribbon-label {
    line-height: 22px;
    text-align: center;
    color: #b5b5b5;
}

/* Адресная строка */
.addressbar {
    display: flex;
    align-items: flex-start;
    height: 42px;
    padding: 5px 12px 0 0;
    background-color: #191919;
}

.nav-buttons {
    display: flex;
    width: 106px;
    height: 30px;
    padding-left: 12px;
}

.nav-buttons button {
    width: 14px;
    margin-right: 16px;
}

.nav-buttons .nav-small {
    width: 8px;
    margin-right: 10px;
    margin-left: -4px;
}

.nav-buttons .nav-up {
    margin: 0;
}

.path {
    flex: 1;
    display: flex;
    align-items: center;
    height: 30px;
    padding-left: 2px;
    border: 1px solid #535353;
}

.crumb {
    margin: 0 7px;
}

.path-text {
    flex: 1;
    padding-bottom: 1px;
    font-family: "Open Sans", sans-serif;
    font-size: 12px;
}

.path button {
    width: 30px;
    height: 28px;
}

.search {
    display: flex;
    align-items: center;
    gap: 12px;
    width: 202px;
    height: 30px;
    margin-left: 12px;
    padding: 0 0 2px 14px;
    border: 1px solid #535353;
}

.search input {
    flex: 1;
    min-width: 0;
    padding: 0;
    border: none;
    outline: none;
    background: none;
    color: #fff;
    font: inherit;
}

.search input::placeholder {
    color: #777;
    opacity: 1;
}

/* Дерево папок */
.content {
    flex: 1;
    min-height: 0;
    display: flex;
}

.sidebar {
    width: 198px;
    padding: 17px 3px 0 1px;
    background-color: #191919;
    border-right: 1px solid #2b2b2b;
}

.tree {
    margin-bottom: 10px;
    display: flex;
    flex-direction: column;
    gap: 2px;
}

.node {
    display: flex;
    align-items: center;
    gap: 5px;
    height: 22px;
    padding: 0 0 2px 23px;
}

.child {
    padding-left: 31px;
}

.current {
    background-color: #333;
}

.pin {
    width: 12px;
    height: 12px;
    margin-left: auto;
    margin-right: 1px;
}

/* Файлы */
.files {
    flex: 1;
    padding: 7px 18px 0 7px;
    background-color: #202020;
}

.group-title {
    display: flex;
    align-items: center;
    gap: 3px;
    height: 24px;
    margin: 0 0 2px;
    padding-bottom: 1px;
    font-family: "Open Sans", sans-serif;
    font-size: 15px;
    font-weight: normal;
    color: #e6e6e6;
}

.group-title::after {
    content: "";
    flex: 1;
    height: 1px;
    margin-left: 5px;
    background-color: #303030;
}

.tiles {
    display: grid;
    grid-template-columns: repeat(auto-fill, 248px);
    gap: 4px 6px;
    margin-bottom: 6px;
    padding-left: 9px;
}

.tile {
    display: flex;
    gap: 3px;
    height: 52px;
    padding: 2px 4px;
}

.tile-name {
    padding: 9px 0 0 1px;
}

.selected {
    background-color: #777;
}

.drive {
    display: flex;
    flex-direction: column;
    width: 189px;
}

.drive-name {
    height: 17px;
    padding-left: 1px;
    line-height: 15px;
}

.bar {
    height: 13px;
    border: 1px solid #bcbcbc;
    background-color: #e6e6e6;
}

.bar-fill {
    display: block;
    height: 100%;
    background-color: #26a0da;
}

.drive-free {
    padding-left: 1px;
    line-height: 18px;
    color: #d6d6d6;
}

/* Строка состояния */
.statusbar {
    display: flex;
    align-items: center;
    height: 23px;
    padding: 0 8px 0 14px;
    background-color: #333;
    color: #dcdcdc;
}

.status-item {
    height: 12px;
    line-height: 12px;
    padding-right: 11px;
    margin-right: 10px;
    border-right: 1px solid #fff;
}

.view-modes {
    display: flex;
    gap: 6px;
    margin-left: auto;
}

/* Панель задач */
.taskbar {
    display: flex;
    height: 40px;
    background-color: #101010;
}

.task {
    width: 48px;
    height: 40px;
}

.apps {
    display: flex;
    gap: 1px;
    margin-left: 3px;
}

.active {
    background-color: #333;
    border-bottom: 2px solid #76b9ed;
}

.running {
    background: linear-gradient(#76b9ed, #76b9ed) center bottom / 40px 2px no-repeat;
}

.tray {
    display: flex;
    align-items: center;
    margin-left: auto;
}

.tray button {
    width: 24px;
    height: 40px;
}

.tray .lang {
    width: 36px;
    font-size: 12px;
}

.tray .clock {
    display: block;
    width: 66px;
    line-height: 18px;
    text-align: center;
}

.tray .notify {
    width: 41px;
}

.show-desktop {
    width: 5px;
    height: 40px;
    margin-left: 7px;
    border-left: 1px solid #5a5a5a;
}
```
